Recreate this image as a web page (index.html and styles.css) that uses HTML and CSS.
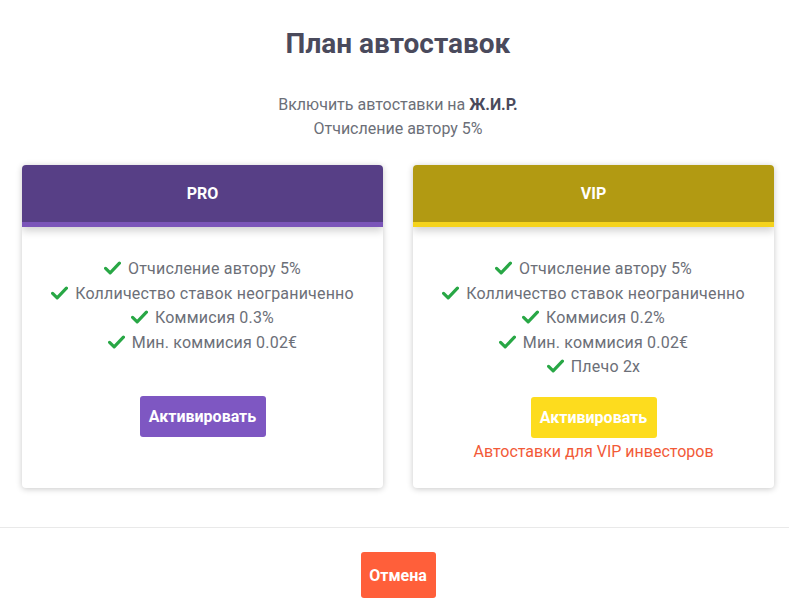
FILE: index.html
```html
<!DOCTYPE html>
<html lang="ru">
<head>
    <meta charset="UTF-8">
    <meta name="viewport" content="width=device-width, initial-scale=1.0">
    <title>План автоставок</title>
    <link rel="stylesheet" href="styles.css">
</head>
<body>
    <div class="modal">
        <div class="modal-body">
            <h2 class="modal-title">План автоставок</h2>
            <p class="modal-sub">Включить автоставки на <b>Ж.И.Р.</b><br>Отчисление автору 5%</p>

            <div class="plans">
                <div class="plan plan-pro">
                    <div class="plan-head">PRO</div>
                    <div class="plan-body">
                        <ul class="plan-list">
                            <li><svg class="check" viewBox="0 0 16 13"><path d="M1.5 6.8 L5.8 11 L14.5 2"/></svg>Отчисление автору 5%</li>
                            <li><svg class="check" viewBox="0 0 16 13"><path d="M1.5 6.8 L5.8 11 L14.5 2"/></svg>Колличество ставок неограниченно</li>
                            <li><svg class="check" viewBox="0 0 16 13"><path d="M1.5 6.8 L5.8 11 L14.5 2"/></svg>Коммисия 0.3%</li>
                            <li><svg class="check" viewBox="0 0 16 13"><path d="M1.5 6.8 L5.8 11 L14.5 2"/></svg>Мин. коммисия 0.02€</li>
                        </ul>
                        <button class="btn btn-pro">Активировать</button>
                    </div>
                </div>
                <div class="plan plan-vip">
                    <div class="plan-head">VIP</div>
                    <div class="plan-body">
                        <ul class="plan-list">
                            <li><svg class="check" viewBox="0 0 16 13"><path d="M1.5 6.8 L5.8 11 L14.5 2"/></svg>Отчисление автору 5%</li>
                            <li><svg class="check" viewBox="0 0 16 13"><path d="M1.5 6.8 L5.8 11 L14.5 2"/></svg>Колличество ставок неограниченно</li>
                            <li><svg class="check" viewBox="0 0 16 13"><path d="M1.5 6.8 L5.8 11 L14.5 2"/></svg>Коммисия 0.2%</li>
                            <li><svg class="check" viewBox="0 0 16 13"><path d="M1.5 6.8 L5.8 11 L14.5 2"/></svg>Мин. коммисия 0.02€</li>
                            <li><svg class="check" viewBox="0 0 16 13"><path d="M1.5 6.8 L5.8 11 L14.5 2"/></svg>Плечо 2x</li>
                        </ul>
                        <button class="btn btn-vip">Активировать</button>
                        <p class="vip-note">Автоставки для VIP инвесторов</p>
                    </div>
                </div>
            </div>
        </div>

        <div class="modal-footer">
            <button class="btn btn-cancel">Отмена</button>
        </div>
    </div>
</body>
</html>
```

FILE: styles.css
```css
:root {
    --text: #4a4a5c;
    --muted: #6c6f78;
    --pro: #573f86;
    --pro-light: #7b55b9;
    --vip: #b29a12;
    --vip-light: #f5d31c;
    --green: #28a745;
    --danger: #f25a38;
    --border: #e9e9e9;
}

* {
    margin: 0;
    padding: 0;
    box-sizing: border-box;
}

body {
    font-family: Roboto, 'Liberation Sans', sans-serif;
    background: #ffffff;
    color: var(--text);
}

.modal {
    width: 789px;
    padding-top: 26px;
}

.modal-body {
    padding-left: 7px;
}

.modal-title {
    text-align: center;
    font-size: 28px;
    font-weight: 700;
    line-height: 36px;
    color: var(--text);
}

.modal-sub {
    margin-top: 31px;
    text-align: center;
    font-size: 16px;
    line-height: 24px;
    color: var(--muted);
}

.modal-sub b {
    color: var(--text);
}

.plans {
    display: flex;
    gap: 30px;
    padding: 0 15px;
    margin-top: 24px;
}

.plan {
    flex: 1;
    border-radius: 4px;
    background: #fff;
    box-shadow: 0 1px 6px rgba(0, 0, 0, 0.22);
    overflow: hidden;
    height: 323px;
}

.plan-head {
    height: 62px;
    display: flex;
    align-items: center;
    justify-content: center;
    color: #fff;
    font-size: 16px;
    font-weight: 700;
    position: relative;
    box-shadow: 0 4px 8px rgba(0, 0, 0, 0.18);
}

.plan-pro .plan-head {
    background: var(--pro);
    border-bottom: 5px solid var(--pro-light);
}

.plan-vip .plan-head {
    background: var(--vip);
    border-bottom: 5px solid var(--vip-light);
}

.plan-body {
    padding-top: 30px;
    text-align: center;
}

.plan-list {
    list-style: none;
    min-height: 122px;
    font-size: 16px;
    line-height: 24.5px;
    letter-spacing: 0.2px;
    color: var(--muted);
}

.plan-list li {
    white-space: nowrap;
}

.check {
    width: 17px;
    height: 14px;
    margin-right: 7px;
    vertical-align: -1px;
}

.check path {
    fill: none;
    stroke: var(--green);
    stroke-width: 3;
    stroke-linecap: round;
    stroke-linejoin: round;
}

.btn {
    border: none;
    border-radius: 3px;
    color: #fff;
    font-family: Roboto, 'Liberation Sans', sans-serif;
    font-size: 16px;
    font-weight: 700;
    cursor: pointer;
}

.btn-pro,
.btn-vip {
    margin-top: 17px;
    width: 126px;
    height: 41px;
}

.btn-pro {
    background: #7e57c2;
}

.btn-vip {
    background: #fddc1e;
}

.vip-note {
    margin-top: 4px;
    font-size: 16px;
    line-height: 20px;
    color: var(--danger);
}

.modal-footer {
    margin-top: 39px;
    border-top: 1px solid var(--border);
    padding: 24px 0 0 7px;
    text-align: center;
}

.btn-cancel {
    width: 75px;
    height: 46px;
    background: #ff5f3a;
}
```
